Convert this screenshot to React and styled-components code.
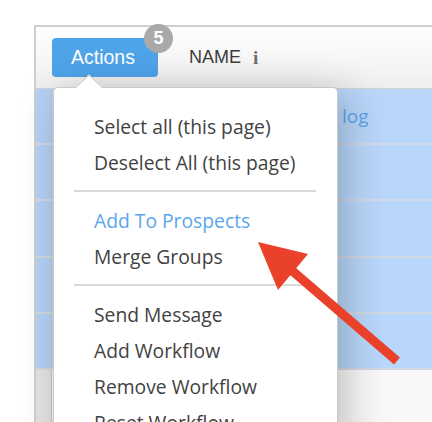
import styled, { createGlobalStyle } from "styled-components";

const GlobalStyle = createGlobalStyle`
  html, body {
    margin: 0;
    padding: 0;
    background: #ffffff;
  }
  * {
    box-sizing: border-box;
  }
`;

export const Page = styled.div`
  position: relative;
  width: 432px;
  height: 422px;
  padding: 25px 0 0 34px;
  overflow: hidden;
  background: #ffffff;
`;

export const Frame = styled.div`
  position: relative;
  height: 100%;
  border-top: 2px solid #cfcfcf;
  border-left: 2px solid #cfcfcf;
  background: #ffffff;
`;

export const Header = styled.div`
  display: flex;
  align-items: flex-start;
  gap: 31px;
  height: 62px;
  padding: 11px 0 0 16px;
  border-bottom: 1px solid #d3d3d3;
  background: linear-gradient(to bottom, #fefefe 0%, #f6f6f6 60%, #eeeeee 100%);
`;

export const ActionsButton = styled.button`
  position: relative;
  display: flex;
  align-items: center;
  width: 106px;
  height: 39px;
  padding: 0 0 0 19px;
  border: none;
  border-radius: 4px;
  background: #4fa3e9;
  color: #ffffff;
  font-family: "Liberation Sans", Arial, sans-serif;
  font-size: 19.5px;
  cursor: pointer;
`;

export const Badge = styled.span`
  position: absolute;
  top: -14px;
  right: -15px;
  display: flex;
  align-items: center;
  justify-content: center;
  width: 29px;
  height: 29px;
  border-radius: 50%;
  background: #a9a9a9;
  color: #ffffff;
  font-family: "Liberation Sans", Arial, sans-serif;
  font-weight: 700;
  font-size: 18px;
`;

export const ColumnTitle = styled.div`
  display: flex;
  align-items: center;
  gap: 12px;
  height: 39px;
  color: #3d3d3d;
  font-family: "Liberation Sans", Arial, sans-serif;
  font-size: 18px;
`;

export const InfoMark = styled.span`
  color: #6e6e6e;
  font-family: "Liberation Serif", "Times New Roman", serif;
  font-weight: 700;
  font-size: 19px;
`;

export const Row = styled.div`
  display: grid;
  grid-template-columns: 16px 286px 1fr;
  height: 56.2px;
  border-bottom: 2px solid ${(p) => (p.$selected ? "#d3d9e0" : "#d6d6d6")};
  background: ${(p) => (p.$selected ? "#b9d7fb" : "#f8f8f8")};
`;

export const CheckCell = styled.div`
  border-right: 1px solid #c6c6c6;
  background: ${(p) => (p.$selected ? "#b4d1f5" : "#e4e4e4")};
`;

export const Cell = styled.div`
  display: flex;
  align-items: center;
  padding-left: 4px;
  color: #5ea4ea;
  font-family: "Open Sans", sans-serif;
  font-size: 19px;
`;

export const Menu = styled.div`
  position: absolute;
  left: 17px;
  top: 60px;
  width: 285px;
  height: 420px;
  padding-top: 21px;
  border: 1px solid #c9c9c9;
  border-radius: 5px;
  background: #ffffff;
  box-shadow: 8px 6px 40px rgba(0, 0, 0, 0.24);
  font-family: "Open Sans", sans-serif;

  &::before,
  &::after {
    content: "";
    position: absolute;
    left: 22px;
    width: 0;
    height: 0;
    border-left: 13px solid transparent;
    border-right: 13px solid transparent;
  }

  &::before {
    top: -14px;
    border-bottom: 13px solid #d2d2d2;
  }

  &::after {
    top: -12px;
    border-bottom: 12px solid #ffffff;
  }
`;

export const MenuItem = styled.div`
  padding-left: 40px;
  line-height: 36px;
  font-size: 19.3px;
  color: ${(p) => (p.$accent ? "#5aa6ec" : "#424242")};
  white-space: nowrap;
  cursor: pointer;
`;

export const Divider = styled.div`
  height: 2px;
  margin: 9px 21px 11px 20px;
  background: #d6d9dd;
`;

export const Arrow = styled.svg`
  position: absolute;
  left: 0;
  top: 0;
  pointer-events: none;
`;

const menuGroups = [
  [{ label: "Select all (this page)" }, { label: "Deselect All (this page)" }],
  [{ label: "Add To Prospects", accent: true }, { label: "Merge Groups" }],
  [
    { label: "Send Message" },
    { label: "Add Workflow" },
    { label: "Remove Workflow" },
    { label: "Reset Workflow" },
  ],
];

const rows = [
  { selected: true, group: "log" },
  { selected: true, group: "" },
  { selected: true, group: "" },
  { selected: true, group: "" },
  { selected: true, group: "" },
  { selected: false, group: "" },
];

export default function App() {
  return (
    <>
      <GlobalStyle />
      <Page>
        <Frame>
          <Header>
            <ActionsButton>
              Actions
              <Badge>5</Badge>
            </ActionsButton>
            <ColumnTitle>
              NAME <InfoMark>i</InfoMark>
            </ColumnTitle>
          </Header>

          {rows.map((r, i) => (
            <Row key={i} $selected={r.selected}>
              <CheckCell $selected={r.selected} />
              <Cell />
              <Cell>{r.group}</Cell>
            </Row>
          ))}

          <Menu>
            {menuGroups.map((group, gi) => (
              <div key={gi}>
                {gi > 0 && <Divider />}
                {group.map((item) => (
                  <MenuItem key={item.label} $accent={item.accent}>
                    {item.label}
                  </MenuItem>
                ))}
              </div>
            ))}
          </Menu>
        </Frame>

        <Arrow width="432" height="422" viewBox="0 0 432 422">
          <polygon points="258,242 308,254 278,290" fill="#e9412a" />
          <line
            x1="289"
            y1="268"
            x2="397"
            y2="361"
            stroke="#e9412a"
            strokeWidth="9"
          />
        </Arrow>
      </Page>
    </>
  );
}
